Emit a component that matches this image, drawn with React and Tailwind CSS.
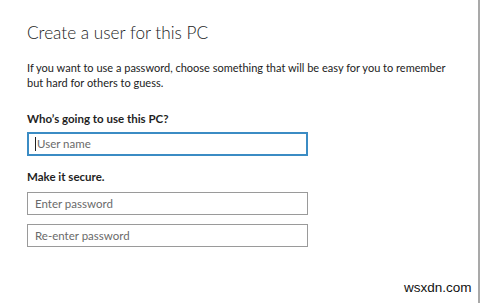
import React from "react";

const App = () => {
  return (
    <div className="relative w-[480px] h-[303px] bg-white overflow-hidden font-['Lato','Open_Sans',sans-serif] text-[#1f1f1f]">
      <div className="absolute right-0 top-0 h-full w-[2px] bg-[#a9a9a9]" />
      <div className="pl-[27px] pt-[23px]">
        <h1 className="text-[17.2px] font-light leading-[20px] text-[#222]">
          Create a user for this PC
        </h1>
        <p className="mt-[18px] w-[424px] text-[11px] leading-[14.5px] text-[#222]">
          If you want to use a password, choose something that will be easy for you to remember but hard for others to guess.
        </p>
        <div className="mt-[22px] text-[11.5px] font-bold leading-[14px]">
          Who’s going to use this PC?
        </div>
        <div className="mt-[6px] flex h-[24px] w-[281px] items-center border-2 border-[#3b8cc4] pl-[6px] text-[11.5px] text-[#6a6a6a]">
          <span className="mr-[1px] h-[14px] w-[1px] bg-[#222]" />
          User name
        </div>
        <div className="mt-[14px] text-[11.5px] font-bold leading-[14px]">
          Make it secure.
        </div>
        <div className="mt-[8px] flex h-[23px] w-[281px] items-center border border-[#9a9a9a] pl-[7px] text-[11.5px] text-[#6a6a6a]">
          Enter password
        </div>
        <div className="mt-[9px] flex h-[23px] w-[281px] items-center border border-[#9a9a9a] pl-[7px] text-[11.5px] text-[#6a6a6a]">
          Re-enter password
        </div>
      </div>
      <div className="absolute left-[404px] top-[280px] font-['Liberation_Sans',Arial,sans-serif] text-[13.5px] leading-[16px] text-[#111]">
        wsxdn.com
      </div>
    </div>
  );
};

export default App;
